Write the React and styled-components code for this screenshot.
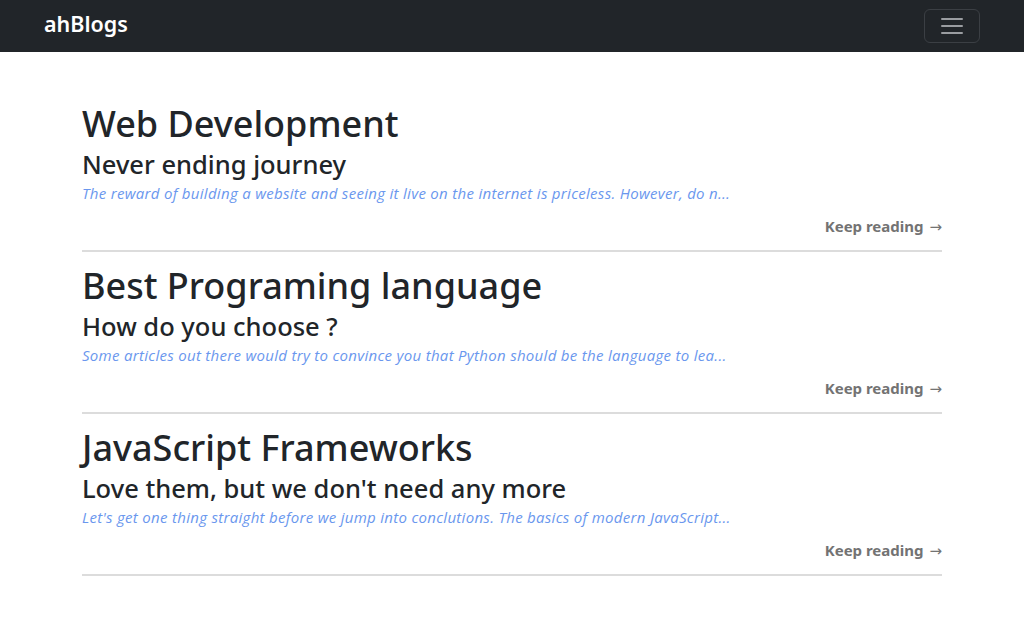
import styled, { createGlobalStyle } from 'styled-components'

const GlobalStyle = createGlobalStyle`
  body {
    margin: 0;
    background: #fff;
    font-family: "Noto Sans", "Open Sans", sans-serif;
    color: #212529;
  }
`

const posts = [
  {
    title: 'Web Development',
    subtitle: 'Never ending journey',
    excerpt: 'The reward of building a website and seeing it live on the internet is priceless. However, do n...',
  },
  {
    title: 'Best Programing language',
    subtitle: 'How do you choose ?',
    excerpt: 'Some articles out there would try to convince you that Python should be the language to lea...',
  },
  {
    title: 'JavaScript Frameworks',
    subtitle: "Love them, but we don't need any more",
    excerpt: "Let's get one thing straight before we jump into conclutions. The basics of modern JavaScript...",
  },
]

const Navbar = styled.nav`
  display: flex;
  align-items: center;
  justify-content: space-between;
  height: 52px;
  padding: 0 44px;
  background: #212529;
  box-sizing: border-box;
`

const Brand = styled.a`
  font-size: 21.5px;
  font-weight: 600;
  color: #fff;
  text-decoration: none;
  margin-top: -5px;
`

const Toggler = styled.button`
  display: flex;
  flex-direction: column;
  justify-content: center;
  gap: 5px;
  width: 56px;
  height: 34px;
  padding: 0 16px;
  background: transparent;
  border: 1px solid #3b3f44;
  border-radius: 6px;

  span {
    display: block;
    height: 2px;
    background: #9a9da1;
    border-radius: 1px;
  }
`

const Main = styled.main`
  width: 860px;
  margin: 0 auto;
  padding-top: 50px;
`

const Post = styled.article`
  border-bottom: 2px solid #dcdcdc;
  padding-bottom: 13px;
  margin-bottom: 12px;
`

const Title = styled.h2`
  margin: 0;
  font-size: 36px;
  font-weight: 500;
  line-height: 44px;
`

const Subtitle = styled.h3`
  margin: 2px 0 0;
  font-size: 25.5px;
  font-weight: 500;
  line-height: 32px;
`

const Excerpt = styled.p`
  margin: 0;
  font-family: "Open Sans", "Noto Sans", sans-serif;
  font-size: 15px;
  font-style: italic;
  letter-spacing: 0.3px;
  line-height: 26px;
  color: #6a97ee;
`

const More = styled.a`
  display: block;
  margin-top: 10px;
  text-align: right;
  font-size: 15px;
  font-weight: 700;
  line-height: 20px;
  color: #737373;
  text-decoration: none;
`

const Arrow = styled.span`
  margin-left: 2px;
  font-family: "DejaVu Sans", sans-serif;
  font-weight: 400;
  font-size: 15px;
`

function App() {
  return (
    <>
      <GlobalStyle />
      <Navbar>
        <Brand href='#'>ahBlogs</Brand>
        <Toggler aria-label='Toggle navigation'>
          <span />
          <span />
          <span />
        </Toggler>
      </Navbar>
      <Main>
        {posts.map((post) => (
          <Post key={post.title}>
            <Title>{post.title}</Title>
            <Subtitle>{post.subtitle}</Subtitle>
            <Excerpt>{post.excerpt}</Excerpt>
            <More href='#'>Keep reading <Arrow>→</Arrow></More>
          </Post>
        ))}
      </Main>
    </>
  )
}

export default App
